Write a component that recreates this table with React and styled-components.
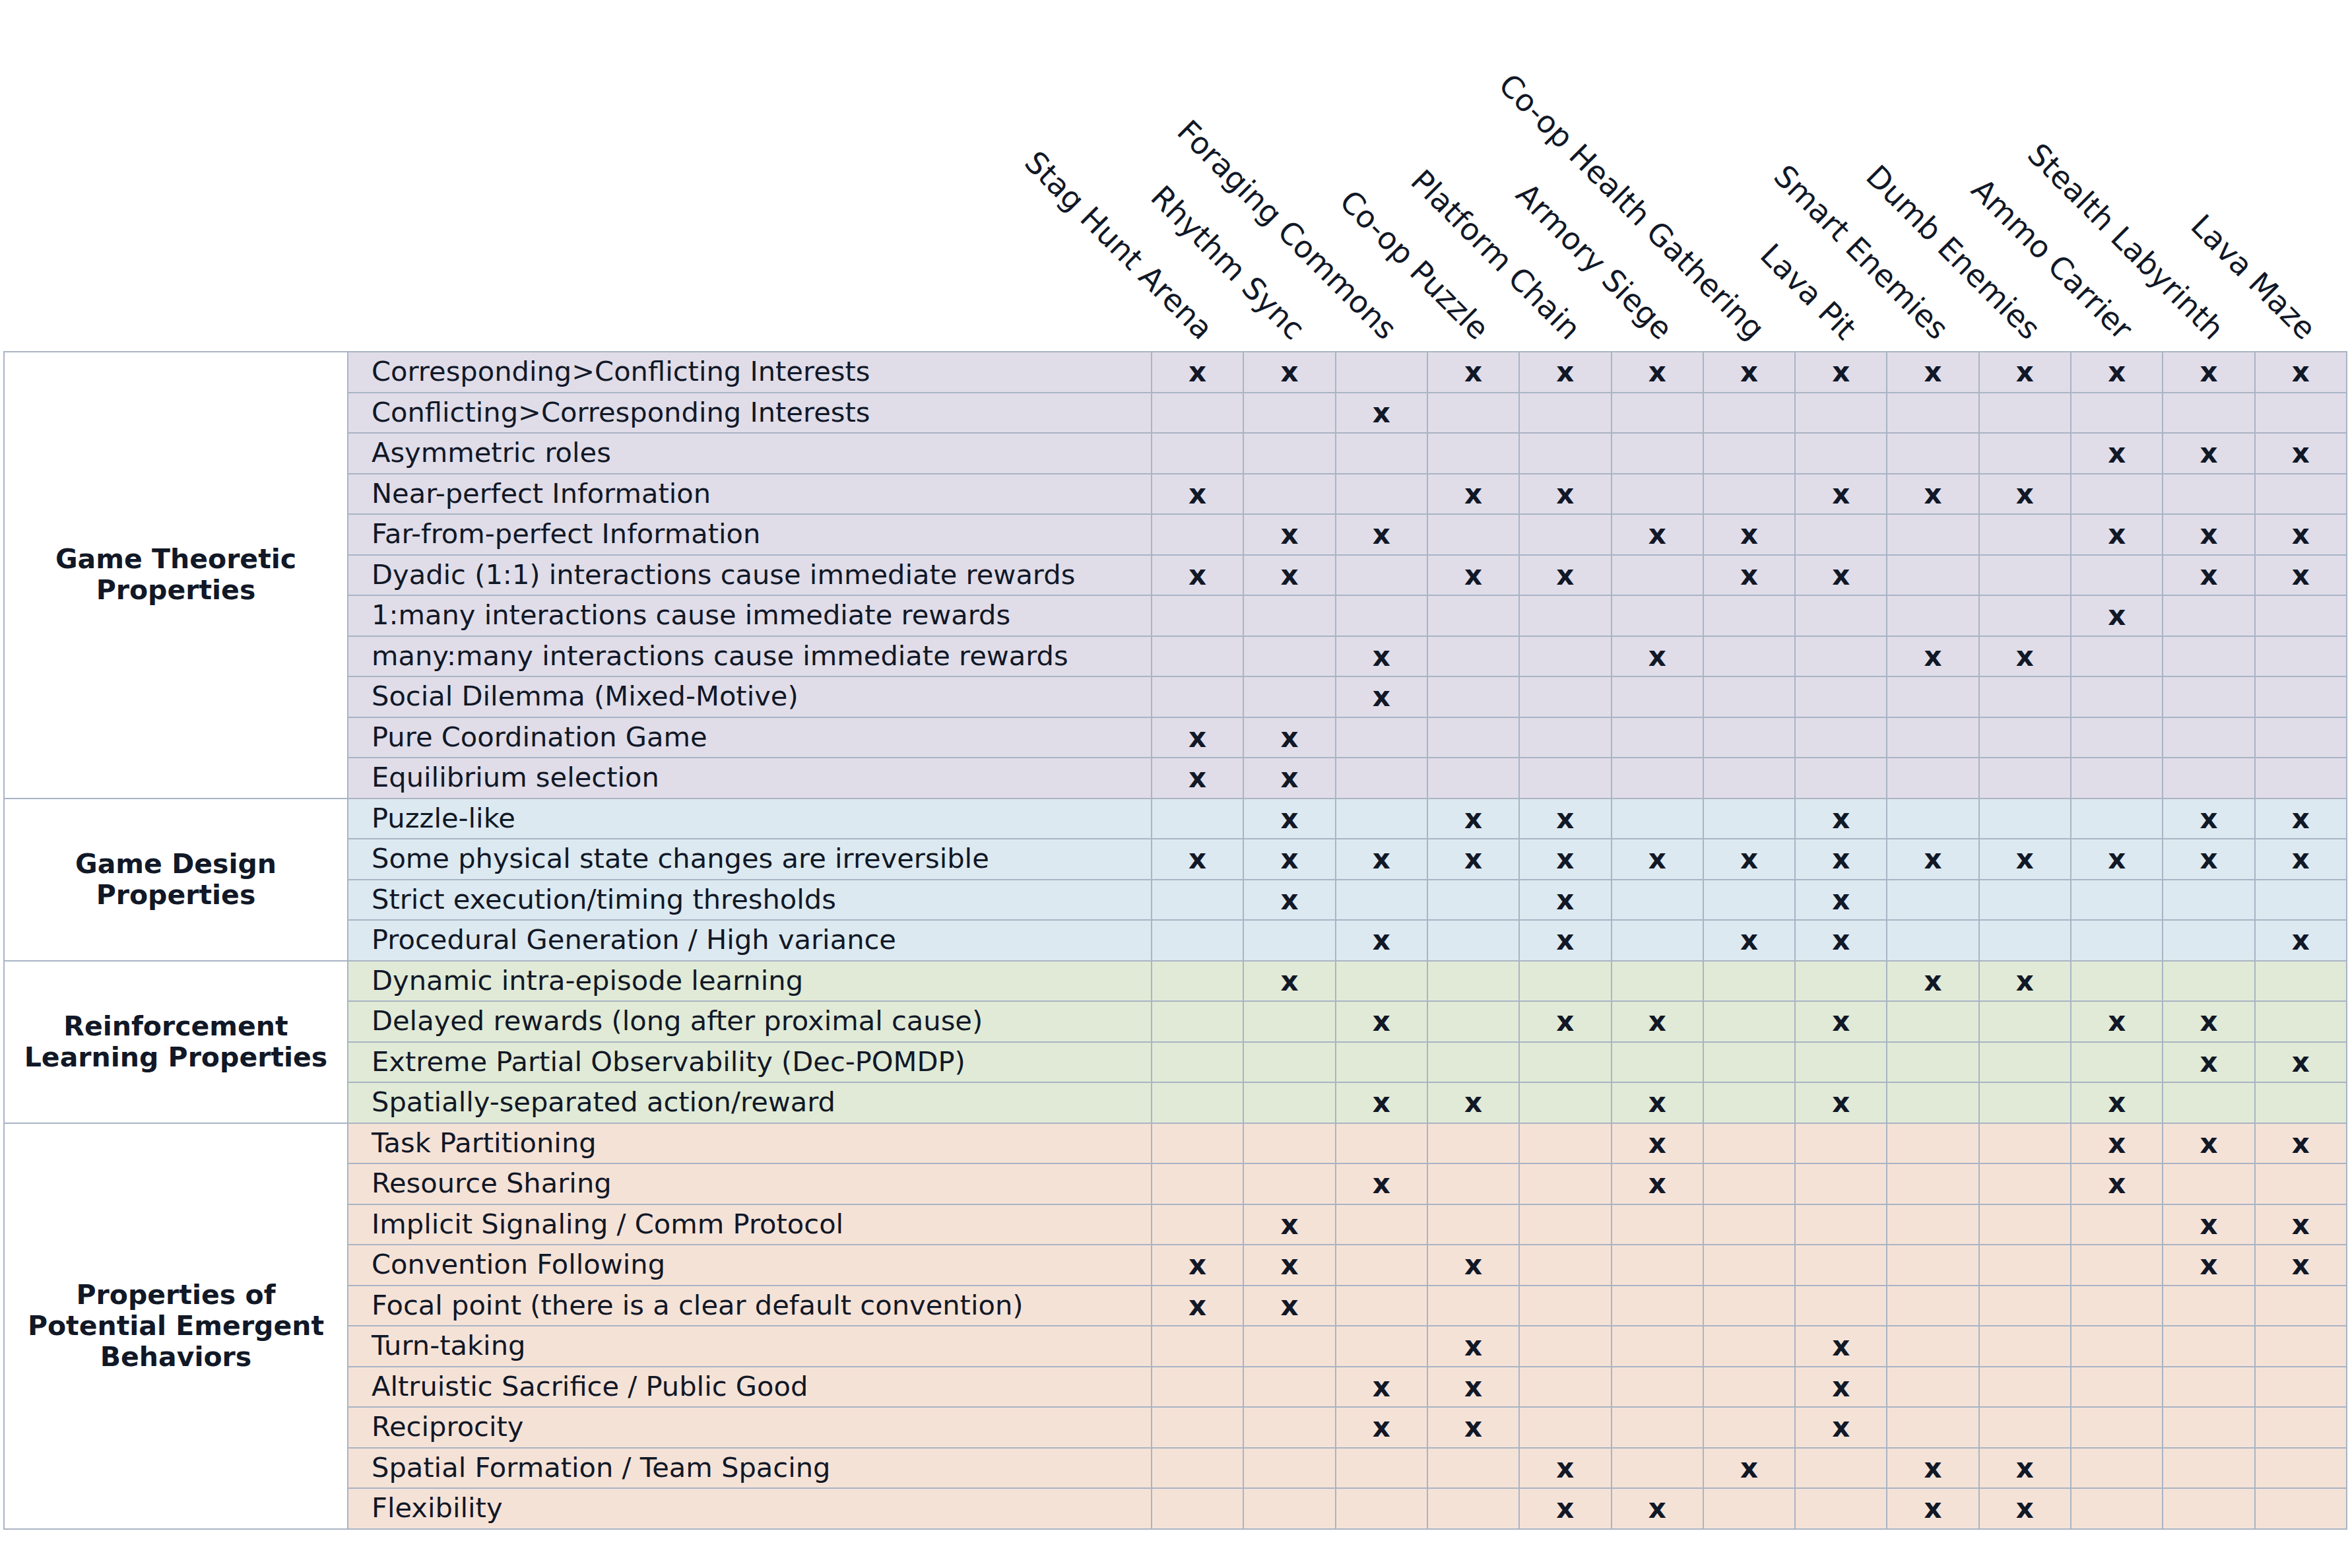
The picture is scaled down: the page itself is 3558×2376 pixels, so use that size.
import React from "react";
import styled, { createGlobalStyle } from "styled-components";

const GlobalStyle = createGlobalStyle`
  html, body {
    margin: 0;
    padding: 0;
    background: #ffffff;
  }
  body {
    font-family: "DejaVu Sans", "Liberation Sans", sans-serif;
    color: #111827;
  }
`;

const COLS = [
  "Stag Hunt Arena",
  "Rhythm Sync",
  "Foraging Commons",
  "Co-op Puzzle",
  "Platform Chain",
  "Armory Siege",
  "Co-op Health Gathering",
  "Lava Pit",
  "Smart Enemies",
  "Dumb Enemies",
  "Ammo Carrier",
  "Stealth Labyrinth",
  "Lava Maze",
];

const GROUPS = [
  {
    title: "Game Theoretic Properties",
    tone: "purple",
    rows: [
      ["Corresponding>Conflicting Interests", [1, 2, 4, 5, 6, 7, 8, 9, 10, 11, 12, 13]],
      ["Conflicting>Corresponding Interests", [3]],
      ["Asymmetric roles", [11, 12, 13]],
      ["Near-perfect Information", [1, 4, 5, 8, 9, 10]],
      ["Far-from-perfect Information", [2, 3, 6, 7, 11, 12, 13]],
      ["Dyadic (1:1) interactions cause immediate rewards", [1, 2, 4, 5, 7, 8, 12, 13]],
      ["1:many interactions cause immediate rewards", [11]],
      ["many:many interactions cause immediate rewards", [3, 6, 9, 10]],
      ["Social Dilemma (Mixed-Motive)", [3]],
      ["Pure Coordination Game", [1, 2]],
      ["Equilibrium selection", [1, 2]],
    ],
  },
  {
    title: "Game Design Properties",
    tone: "blue",
    rows: [
      ["Puzzle-like", [2, 4, 5, 8, 12, 13]],
      ["Some physical state changes are irreversible", [1, 2, 3, 4, 5, 6, 7, 8, 9, 10, 11, 12, 13]],
      ["Strict execution/timing thresholds", [2, 5, 8]],
      ["Procedural Generation / High variance", [3, 5, 7, 8, 13]],
    ],
  },
  {
    title: "Reinforcement Learning Properties",
    tone: "green",
    rows: [
      ["Dynamic intra-episode learning", [2, 9, 10]],
      ["Delayed rewards (long after proximal cause)", [3, 5, 6, 8, 11, 12]],
      ["Extreme Partial Observability (Dec-POMDP)", [12, 13]],
      ["Spatially-separated action/reward", [3, 4, 6, 8, 11]],
    ],
  },
  {
    title: "Properties of Potential Emergent Behaviors",
    tone: "peach",
    rows: [
      ["Task Partitioning", [6, 11, 12, 13]],
      ["Resource Sharing", [3, 6, 11]],
      ["Implicit Signaling / Comm Protocol", [2, 12, 13]],
      ["Convention Following", [1, 2, 4, 12, 13]],
      ["Focal point (there is a clear default convention)", [1, 2]],
      ["Turn-taking", [4, 8]],
      ["Altruistic Sacrifice / Public Good", [3, 4, 8]],
      ["Reciprocity", [3, 4, 8]],
      ["Spatial Formation / Team Spacing", [5, 7, 9, 10]],
      ["Flexibility", [5, 6, 9, 10]],
    ],
  },
];

const TONES = {
  purple: "#e0dde9",
  blue: "#dde9f0",
  green: "#e1ead6",
  peach: "#f5e2d7",
};

const LINE = "#a9b4c4";
const TEMPLATE = "519px 1216px repeat(13, 1fr)";

const Page = styled.div`
  width: 3552px;
  padding-left: 5px;
`;

const HeaderRow = styled.div`
  display: grid;
  grid-template-columns: ${TEMPLATE};
  column-gap: 2px;
  padding: 0 2px;
  height: 532px;
`;

const Corner = styled.div`
  grid-column: span 2;
`;

const HeadCell = styled.div`
  display: flex;
  justify-content: center;
  align-items: flex-end;
  min-width: 0;
`;

const Anchor = styled.div`
  width: 0;
  min-width: 0;
  display: flex;
  justify-content: flex-end;
`;

const ColLabel = styled.span`
  white-space: nowrap;
  font-size: 46px;
  line-height: 52px;
  transform-origin: 100% 50%;
  transform: translate(15px, 0px) rotate(45deg);
`;

const Grid = styled.div`
  display: grid;
  grid-template-columns: ${TEMPLATE};
  grid-auto-rows: 59.5px;
  gap: 2px;
  background: ${LINE};
  border: 2px solid ${LINE};
`;

const GroupCell = styled.div`
  grid-column: 1;
  grid-row: span ${(p) => p.$span};
  background: #ffffff;
  display: flex;
  align-items: center;
  justify-content: center;
  text-align: center;
  padding: 0 24px;
  font-weight: 700;
  font-size: 41px;
  line-height: 47px;
`;

const PropCell = styled.div`
  grid-column: 2;
  background: ${(p) => TONES[p.$tone]};
  display: flex;
  align-items: center;
  padding: 0 0 2px 35px;
  font-size: 41.6px;
  white-space: nowrap;
`;

const MarkCell = styled.div`
  background: ${(p) => TONES[p.$tone]};
  display: flex;
  align-items: center;
  justify-content: center;
  font-weight: 700;
  font-size: 42px;
`;

export default function App() {
  return (
    <>
      <GlobalStyle />
      <Page>
        <HeaderRow>
          <Corner />
          {COLS.map((c) => (
            <HeadCell key={c}>
              <Anchor>
                <ColLabel>{c}</ColLabel>
              </Anchor>
            </HeadCell>
          ))}
        </HeaderRow>
        <Grid>
          {GROUPS.map((g) => (
            <React.Fragment key={g.title}>
              <GroupCell $span={g.rows.length}>{g.title}</GroupCell>
              {g.rows.map(([label, marks]) => (
                <React.Fragment key={label}>
                  <PropCell $tone={g.tone}>{label}</PropCell>
                  {COLS.map((c, i) => (
                    <MarkCell key={c} $tone={g.tone}>
                      {marks.includes(i + 1) ? "x" : ""}
                    </MarkCell>
                  ))}
                </React.Fragment>
              ))}
            </React.Fragment>
          ))}
        </Grid>
      </Page>
    </>
  );
}
